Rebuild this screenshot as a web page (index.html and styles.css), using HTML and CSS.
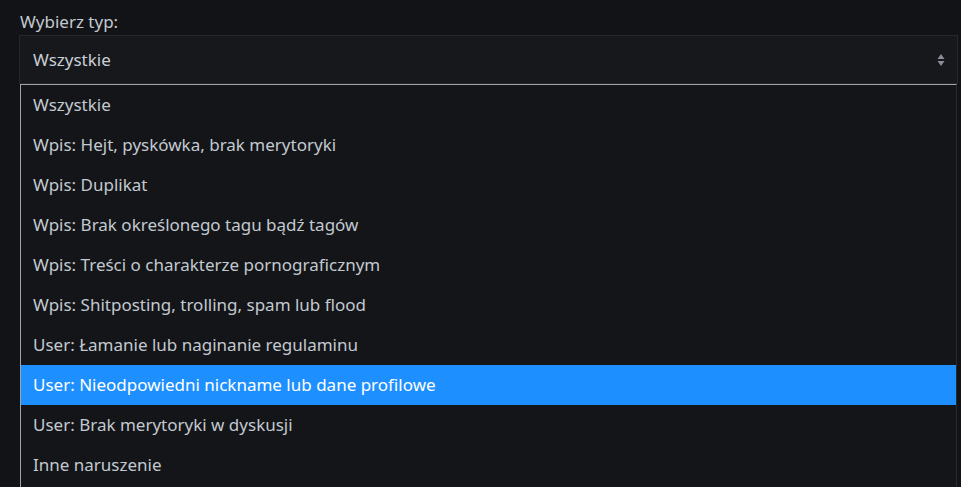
FILE: index.html
```html
<!DOCTYPE html>
<html lang="pl">
<head>
  <meta charset="UTF-8">
  <title>Wybierz typ</title>
  <link rel="stylesheet" href="styles.css">
</head>
<body>
  <div class="field">
    <label class="field-label">Wybierz typ:</label>
    <div class="select">
      <span class="select-value">Wszystkie</span>
      <svg class="select-arrows" width="8" height="14" viewBox="0 0 8 14">
        <path d="M4 1 L7.5 6 H0.5 Z" fill="#8b8f95"/>
        <path d="M4 13 L7.5 8 H0.5 Z" fill="#8b8f95"/>
      </svg>
    </div>
    <ul class="options">
      <li>Wszystkie</li>
      <li>Wpis: Hejt, pyskówka, brak merytoryki</li>
      <li>Wpis: Duplikat</li>
      <li>Wpis: Brak określonego tagu bądź tagów</li>
      <li>Wpis: Treści o charakterze pornograficznym</li>
      <li>Wpis: Shitposting, trolling, spam lub flood</li>
      <li>User: Łamanie lub naginanie regulaminu</li>
      <li class="active">User: Nieodpowiedni nickname lub dane profilowe</li>
      <li>User: Brak merytoryki w dyskusji</li>
      <li>Inne naruszenie</li>
      <li>Komentarz: Hejt, pyskówka, brak merytoryki</li>
    </ul>
  </div>
</body>
</html>
```

FILE: styles.css
```css
* {
  box-sizing: border-box;
  margin: 0;
  padding: 0;
}

html, body {
  height: 100%;
}

body {
  background-color: #121316;
  color: #c3c9d0;
  font-family: "Noto Sans", "Open Sans", sans-serif;
  font-size: 17px;
  overflow: hidden;
}

.field {
  padding: 12px 3px 0 19px;
}

.field-label {
  display: block;
  height: 23px;
  line-height: 20px;
  padding-left: 1px;
}

.select {
  align-items: center;
  background-color: #16181b;
  border: 1px solid #24272b;
  display: flex;
  height: 49px;
  justify-content: space-between;
  padding: 0 12px 0 13px;
}

.select-value {
  color: #c9cfd6;
}

.options {
  background-color: #131519;
  border-left: 1px solid #a3a3a3;
  border-top: 1px solid #a3a3a3;
  border-right: 1px solid #26292e;
  list-style-type: none;
  margin-left: 1px;
  margin-right: 1px;
}

.options li {
  height: 40px;
  line-height: 40px;
  padding-left: 12px;
  white-space: nowrap;
}

.options li.active {
  background-color: #1e8fff;
  color: #ffffff;
}
```
